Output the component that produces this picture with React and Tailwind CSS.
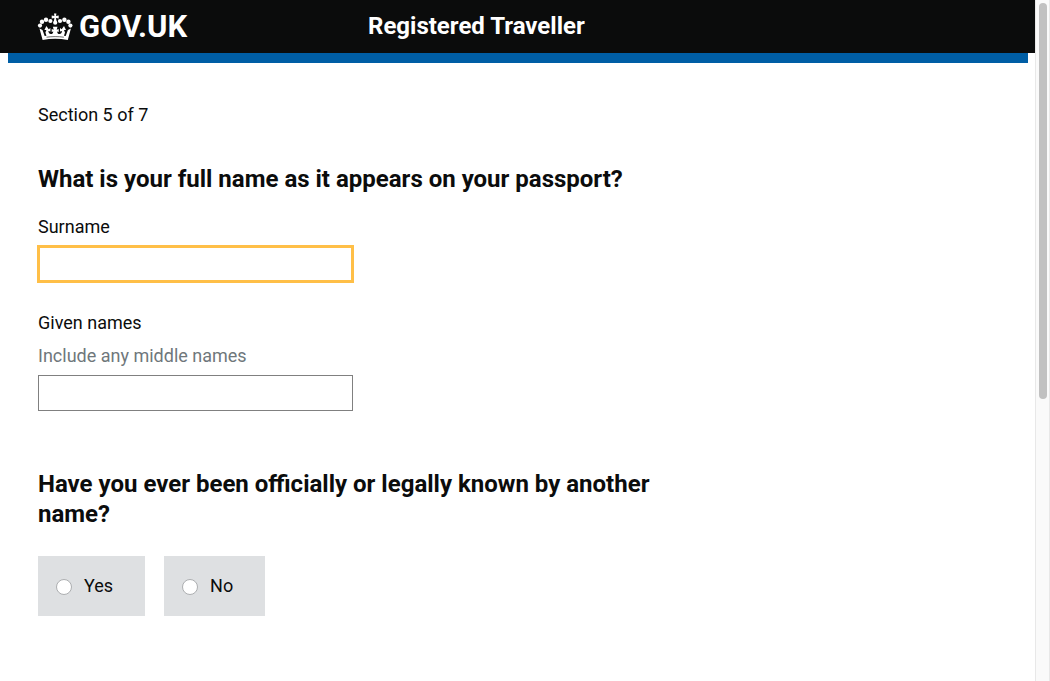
import React from "react";

function Crown() {
  return (
    <svg viewBox="0 0 36 28" className="h-7 w-9 shrink-0" fill="#fff" aria-hidden="true">
      <path d="M17 .6h2.400l-.4 2.500 2.700-.5v2.800l-2.700-.4.5 3h-2.600l.5-3-2.700.4V2.600l2.700.5z" />
      <circle cx="18.200" cy="9.700" r="2.100" />
      <circle cx="13.400" cy="8" r="2.100" />
      <circle cx="9" cy="6.800" r="2.200" />
      <circle cx="5" cy="8.800" r="2.200" />
      <circle cx="3" cy="12.600" r="2.100" />
      <circle cx="23" cy="8" r="2.100" />
      <circle cx="27.400" cy="6.800" r="2.200" />
      <circle cx="31.400" cy="8.800" r="2.200" />
      <circle cx="33.400" cy="12.600" r="2.100" />
      <path d="M2.500 15.500l3 1.500 2.200 6c7-1.300 14-1.300 21 0l2.200-6 3-1.500-3.100 11.500c-8.300-1.600-16.900-1.600-25.200 0z" />
      <path d="M9.400 13l2.300 3.200 1.700-1.100v3.500l-2.100-.6c.3 2 1.200 3 2.500 3 1.500 0 2.400-1 2.500-2.600l-1.600.5v-3l2 .8-.8-3h4.600l-.8 3 2-.8v3l-1.600-.5c.1 1.600 1 2.600 2.500 2.600 1.300 0 2.200-1 2.500-3l-2.100.6v-3.500l1.700 1.100 2.300-3.200 2 4-2 .1 1 2.500-1.500 4.600c-5.500-.9-11-.9-16.600 0l-1.500-4.600 1-2.500-2-.1z" />
      <path d="M9.500 24.200c5.800-.8 11.600-.8 17.400 0" fill="none" stroke="#0b0c0c" strokeWidth=".6" />
    </svg>
  );
}

function TextField({ id, label, hint, className }) {
  return (
    <div className="flex flex-col items-start">
      <label htmlFor={id} className="leading-[25px]">{label}</label>
      {hint && <p id={id + "-hint"} className="mt-2 leading-[25px] text-[#6f777b]">{hint}</p>}
      <input
        id={id}
        type="text"
        aria-describedby={hint ? id + "-hint" : undefined}
        className={"mt-[7px] h-9 w-full max-w-[315px] bg-white px-1 " + className}
      />
    </div>
  );
}

function Choice({ label }) {
  return (
    <label className="flex h-15 items-center gap-3 bg-[#dee0e2] pr-8 pl-[18px]">
      <input
        type="radio"
        name="other-name"
        value={label}
        className="mt-0.5 size-4 appearance-none rounded-full border border-[#adafb1] bg-white checked:border-4 checked:border-[#005ea5]"
      />
      {label}
    </label>
  );
}

export default function App() {
  return (
    <div className="flex min-h-screen bg-white font-['Roboto',sans-serif] text-lg text-[#0b0c0c]">
      <div className="min-w-0 flex-1">
        <header>
          <div className="flex h-[53px] items-center bg-[#0b0c0c] pl-[37px] text-white">
            <div className="w-[331px] shrink-0">
              <a href="#home" className="flex w-max items-center gap-1.5">
                <Crown />
                <span className="text-[31px] leading-9 font-bold">GOV.UK</span>
              </a>
            </div>
            <a href="#service" className="pb-0.5 text-2xl leading-[30px] font-bold">Registered Traveller</a>
          </div>
          <div className="mr-[7px] ml-2 h-2.5 bg-[#005ea5]" />
        </header>
        <main className="px-[38px] pt-[39px] pb-16">
          <p className="leading-[25px]">Section 5 of 7</p>
          <form className="max-w-[640px]">
            <h1 className="mt-[37px] text-2xl leading-[30px] font-bold">
              What is your full name as it appears on your passport?
            </h1>
            <div className="mt-5 flex flex-col gap-7">
              <TextField id="surname" label="Surname" className="outline-3 -outline-offset-2 outline-[#ffbf47]" />
              <TextField
                id="given-names"
                label="Given names"
                hint="Include any middle names"
                className="border border-[#808080] outline-none"
              />
            </div>
            <fieldset className="mt-[58px]">
              <legend className="text-2xl leading-[30px] font-bold">
                Have you ever been officially or legally known by another name?
              </legend>
              <div className="mt-[27px] flex gap-[19px]">
                <Choice label="Yes" />
                <Choice label="No" />
              </div>
            </fieldset>
          </form>
        </main>
      </div>
      <div className="w-[15px] shrink-0 border-x border-[#e8e8e8] bg-[#fafafa] px-[3px] pt-[3px]" aria-hidden="true">
        <div className="h-[396px] w-2 rounded-full bg-[#c1c1c1]" />
      </div>
    </div>
  );
}
